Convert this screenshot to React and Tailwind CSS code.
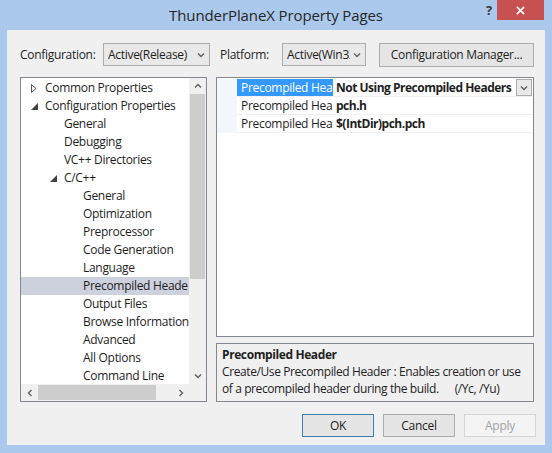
import React from 'react';

const font = { fontFamily: '"Segoe UI", "Open Sans", "Noto Sans", sans-serif' };

const treeRows = [
  { label: 'Common Properties', level: 0, arrow: 'closed' },
  { label: 'Configuration Properties', level: 0, arrow: 'open' },
  { label: 'General', level: 1 },
  { label: 'Debugging', level: 1 },
  { label: 'VC++ Directories', level: 1 },
  { label: 'C/C++', level: 1, arrow: 'open' },
  { label: 'General', level: 2 },
  { label: 'Optimization', level: 2 },
  { label: 'Preprocessor', level: 2 },
  { label: 'Code Generation', level: 2 },
  { label: 'Language', level: 2 },
  { label: 'Precompiled Heade', level: 2, selected: true },
  { label: 'Output Files', level: 2 },
  { label: 'Browse Information', level: 2 },
  { label: 'Advanced', level: 2 },
  { label: 'All Options', level: 2 },
  { label: 'Command Line', level: 2 },
];

const indent = ['pl-[24px]', 'pl-[43px]', 'pl-[62px]'];

const Chevron = ({ dir = 'down', className = '' }) => {
  const d = {
    down: 'M1 1.5 L4 4.5 L7 1.5',
    up: 'M1 4.5 L4 1.5 L7 4.5',
    left: 'M4.5 1 L1.5 4 L4.5 7',
    right: 'M1.5 1 L4.5 4 L1.5 7',
  }[dir];
  const box = dir === 'down' || dir === 'up' ? '0 0 8 6' : '0 0 6 8';
  return (
    <svg viewBox={box} className={className} fill="none" stroke="#606060" strokeWidth="1.4">
      <path d={d} />
    </svg>
  );
};

const Select = ({ value, width }) => (
  <div className={`flex shrink-0 items-center h-[23px] ${width} border border-[#acacac] bg-[#e9e9e9] pl-[4px] pr-[4px]`}>
    <span className="flex-1 min-w-0 overflow-hidden whitespace-nowrap text-[12px] text-[#1e1e1e]">{value}</span>
    <Chevron className="shrink-0 w-[8px] h-[6px] ml-[3px]" />
  </div>
);

const Button = ({ children, kind }) => {
  const cls =
    kind === 'default'
      ? 'border-[#3c7fb1] bg-[#e5e5e5] text-[#1e1e1e]'
      : kind === 'disabled'
      ? 'border-[#d5d5d5] bg-[#f4f4f4] text-[#a3a3a3]'
      : 'border-[#acacac] bg-[#e5e5e5] text-[#1e1e1e]';
  return (
    <div className={`flex items-center justify-center w-[72px] h-[23px] border text-[12px] ${cls}`}>
      {children}
    </div>
  );
};

export default function App() {
  return (
    <div className="w-[552px] h-[453px] bg-[#aac9ec] flex flex-col overflow-hidden tracking-[-0.3px]" style={font}>
      {/* Title bar */}
      <div className="relative h-[30px] flex items-center justify-center">
        <span className="text-[15px] text-[#262626] mt-[1px] tracking-[-0.1px]">ThunderPlaneX Property Pages</span>
        <span className="absolute left-[486px] top-[1px] text-[13px] font-bold text-[#3a3a3a]">?</span>
        <div className="absolute left-[497px] top-0 w-[47px] h-[20px] bg-[#c75050] flex items-center justify-center">
          <svg viewBox="0 0 10 10" className="w-[9px] h-[9px]" stroke="white" strokeWidth="1.8">
            <path d="M1 1 L9 9 M9 1 L1 9" />
          </svg>
        </div>
      </div>

      {/* Client area */}
      <div className="mx-[7px] w-[538px] h-[415px] bg-[#f0f0f0] flex flex-col">
        {/* Config row */}
        <div className="flex items-center h-[23px] mt-[13px]">
          <span className="ml-[13px] w-[83px] shrink-0 text-[12px] text-[#1e1e1e]">Configuration:</span>
          <Select value="Active(Release)" width="w-[107px]" />
          <span className="ml-[10px] w-[62px] shrink-0 text-[12px] text-[#1e1e1e]">Platform:</span>
          <Select value="Active(Win32)" width="w-[84px]" />
          <div className="ml-[13px] shrink-0 flex items-center justify-center w-[155px] h-[24px] border border-[#acacac] bg-[#e5e5e5] text-[12px] text-[#1e1e1e]">
            Configuration Manager...
          </div>
        </div>

        {/* Main */}
        <div className="flex mt-[11px] ml-[13px] h-[325px]">
          {/* Tree */}
          <div className="w-[187px] shrink-0 h-[325px] border border-[#828790] bg-white flex flex-col">
            <div className="flex h-[306px]">
              <div className="flex-1 min-w-0 flex flex-col pt-[1px] overflow-hidden">
                {treeRows.map((r, i) => (
                  <div
                    key={i}
                    className={`relative shrink-0 h-[18px] flex items-center whitespace-nowrap text-[12px] text-[#1e1e1e] ${indent[r.level]} ${
                      r.selected ? 'bg-[#cdd0dd]' : ''
                    }`}
                  >
                    {r.arrow === 'closed' && (
                      <svg viewBox="0 0 6 9" className="absolute left-[10px] top-[5px] w-[6px] h-[9px]" fill="none" stroke="#555" strokeWidth="1">
                        <path d="M0.5 0.5 L5 4.5 L0.5 8.5 Z" />
                      </svg>
                    )}
                    {r.arrow === 'open' && (
                      <svg
                        viewBox="0 0 7 7"
                        className={`absolute ${r.level === 0 ? 'left-[10px]' : 'left-[29px]'} top-[6px] w-[7px] h-[7px]`}
                        fill="#404040"
                      >
                        <path d="M7 0 L7 7 L0 7 Z" />
                      </svg>
                    )}
                    {r.label}
                  </div>
                ))}
              </div>
              {/* Vertical scrollbar */}
              <div className="w-[17px] shrink-0 bg-[#f0f0f0] flex flex-col items-center">
                <div className="h-[16px] flex items-center justify-center">
                  <Chevron dir="up" className="w-[8px] h-[6px]" />
                </div>
                <div className="w-[15px] h-[185px] bg-[#cdcdcd]" />
                <div className="flex-1" />
                <div className="h-[16px] flex items-center justify-center">
                  <Chevron dir="down" className="w-[8px] h-[6px]" />
                </div>
              </div>
            </div>
            {/* Horizontal scrollbar */}
            <div className="flex h-[17px]">
              <div className="flex-1 bg-[#f0f0f0] flex items-center">
                <div className="w-[17px] flex justify-center">
                  <Chevron dir="left" className="w-[6px] h-[8px]" />
                </div>
                <div className="w-[118px] h-[15px] bg-[#cdcdcd]" />
                <div className="flex-1" />
                <div className="w-[17px] flex justify-center">
                  <Chevron dir="right" className="w-[6px] h-[8px]" />
                </div>
              </div>
              <div className="w-[17px] bg-[#f0f0f0]" />
            </div>
          </div>

          {/* Right side */}
          <div className="ml-[9px] w-[318px] shrink-0 flex flex-col">
            <div className="h-[261px] border border-[#828790] bg-white pt-[1px]">
              {[
                ['Precompiled Hea', 'Not Using Precompiled Headers', true],
                ['Precompiled Hea', 'pch.h', false],
                ['Precompiled Hea', '$(IntDir)pch.pch', false],
              ].map(([name, value, sel], i) => (
                <div key={i} className="flex h-[18px] text-[12px]">
                  <div className="w-[20px] shrink-0 bg-[#f3f6fb]" />
                  <div className="flex-1 min-w-0 flex border-b border-[#f0f0f0]">
                    <div
                      className={`w-[96px] shrink-0 pl-[4px] flex items-center whitespace-nowrap overflow-hidden ${
                        sel ? 'bg-[#3399ff] text-white' : 'text-[#1e1e1e]'
                      }`}
                    >
                      {name}
                    </div>
                    <div className="flex-1 min-w-0 flex items-center pl-[3px] font-bold tracking-[-0.5px] text-[#1e1e1e] whitespace-nowrap overflow-hidden">
                      {value}
                    </div>
                    {sel && (
                      <div className="w-[16px] shrink-0 h-[17px] mr-[1px] border border-[#acacac] bg-[#e9e9e9] flex items-center justify-center">
                        <Chevron className="w-[8px] h-[6px]" />
                      </div>
                    )}
                  </div>
                </div>
              ))}
            </div>
            <div className="mt-[6px] h-[59px] border border-[#828790] bg-[#f0f0f0] px-[5px] pt-[2px] text-[12px] text-[#1e1e1e] leading-[17px] whitespace-nowrap tracking-[-0.4px]">
              <div className="font-bold">Precompiled Header</div>
              <div>Create/Use Precompiled Header : Enables creation or use</div>
              <div>
                of a precompiled header during the build.<span className="ml-[16px]">(/Yc, /Yu)</span>
              </div>
            </div>
          </div>
        </div>

        {/* Buttons */}
        <div className="flex justify-end gap-[9px] mt-[12px] mr-[9px]">
          <Button kind="default">OK</Button>
          <Button>Cancel</Button>
          <Button kind="disabled">Apply</Button>
        </div>
      </div>
    </div>
  );
}
